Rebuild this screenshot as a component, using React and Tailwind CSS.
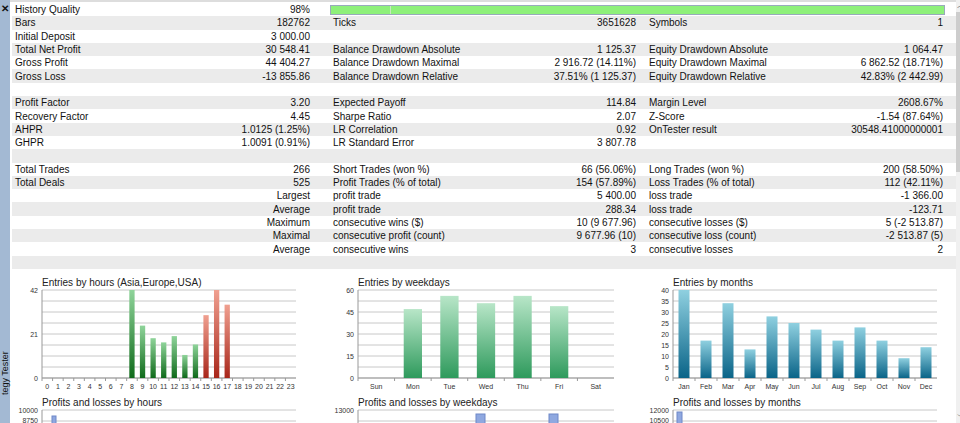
import React from 'react';

const rows = [
  [['History Quality', '98%'], 'bar', null],
  [['Bars', '182762'], ['Ticks', '3651628'], ['Symbols', '1']],
  [['Initial Deposit', '3 000.00'], null, null],
  [['Total Net Profit', '30 548.41'], ['Balance Drawdown Absolute', '1 125.37'], ['Equity Drawdown Absolute', '1 064.47']],
  [['Gross Profit', '44 404.27'], ['Balance Drawdown Maximal', '2 916.72 (14.11%)'], ['Equity Drawdown Maximal', '6 862.52 (18.71%)']],
  [['Gross Loss', '-13 855.86'], ['Balance Drawdown Relative', '37.51% (1 125.37)'], ['Equity Drawdown Relative', '42.83% (2 442.99)']],
  [null, null, null],
  [['Profit Factor', '3.20'], ['Expected Payoff', '114.84'], ['Margin Level', '2608.67%']],
  [['Recovery Factor', '4.45'], ['Sharpe Ratio', '2.07'], ['Z-Score', '-1.54 (87.64%)']],
  [['AHPR', '1.0125 (1.25%)'], ['LR Correlation', '0.92'], ['OnTester result', '30548.41000000001']],
  [['GHPR', '1.0091 (0.91%)'], ['LR Standard Error', '3 807.78'], null],
  [null, null, null],
  [['Total Trades', '266'], ['Short Trades (won %)', '66 (56.06%)'], ['Long Trades (won %)', '200 (58.50%)']],
  [['Total Deals', '525'], ['Profit Trades (% of total)', '154 (57.89%)'], ['Loss Trades (% of total)', '112 (42.11%)']],
  [['', 'Largest'], ['profit trade', '5 400.00'], ['loss trade', '-1 366.00']],
  [['', 'Average'], ['profit trade', '288.34'], ['loss trade', '-123.71']],
  [['', 'Maximum'], ['consecutive wins ($)', '10 (9 677.96)'], ['consecutive losses ($)', '5 (-2 513.87)']],
  [['', 'Maximal'], ['consecutive profit (count)', '9 677.96 (10)'], ['consecutive loss (count)', '-2 513.87 (5)']],
  [['', 'Average'], ['consecutive wins', '3'], ['consecutive losses', '2']],
  [null, null, null],
];

function Cell({ c, w }) {
  if (c === 'bar') {
    return (
      <div className={`${w} h-full flex items-center`}>
        <div className="w-full h-[10px] bg-[#8ef07a] border border-[#9ab] flex">
          <div className="w-[60px] border-r border-[#c8e8c0]" />
          <div className="flex-1" />
        </div>
      </div>
    );
  }
  return (
    <div className={`${w} flex justify-between items-center pr-[2px]`}>
      <span className="pl-[3px]">{c ? c[0] : ''}</span>
      <span>{c ? c[1] : ''}</span>
    </div>
  );
}

function Chart({ title, yTicks, yMax, labels, values, colors, plotL, plotR, sub, subTicks, subBars, grad }) {
  const top = 20, bot = 108;
  const step = (plotR - plotL) / labels.length;
  const bw = Math.max(5, step * 0.5);
  return (
    <svg width="312" height="154" className="shrink-0" style={{ fontFamily: 'Liberation Sans, Arial, sans-serif' }}>
      <defs>
        {colors.map((c, i) => (
          <linearGradient key={i} id={`g${grad}${i}`} x1="0" y1="0" x2="0" y2="1">
            <stop offset="0" stopColor={c[0]} />
            <stop offset="1" stopColor={c[1]} />
          </linearGradient>
        ))}
      </defs>
      <text x={plotL} y="16" fontSize="10" fill="#222">{title}</text>
      {[0, 1, 2, 3, 4, 5, 6, 7, 8].map((i) => {
        const y = top + ((bot - top) * i) / 8;
        return <line key={i} x1={plotL} x2={plotR} y1={y} y2={y} stroke="#c8c8c8" />;
      })}
      <line x1={plotL} x2={plotL} y1={top} y2={bot} stroke="#999" />
      <line x1={plotL} x2={plotR} y1={bot} y2={bot} stroke="#999" />
      {yTicks.map((t) => (
        <text key={t} x={plotL - 4} y={bot - ((bot - top) * t) / yMax + 3} fontSize="7" textAnchor="end" fill="#333">{t}</text>
      ))}
      {labels.map((l, i) => {
        const cx = plotL + step * (i + 0.5);
        const v = values[i] || 0;
        const h = ((bot - top) * v) / yMax;
        const ci = colors.length > 1 && i >= 15 ? 1 : 0;
        return (
          <g key={i}>
            <line x1={plotL + step * i} x2={plotL + step * i} y1={bot} y2={bot + 3} stroke="#999" />
            {v > 0 && <rect x={cx - bw / 2} y={bot - h} width={bw} height={h} fill={`url(#g${grad}${ci})`} />}
            <text x={cx} y={bot + 11} fontSize="7" textAnchor="middle" fill="#333">{l}</text>
          </g>
        );
      })}
      <text x={plotL} y="136" fontSize="10" fill="#222">{sub}</text>
      <line x1={plotL} x2={plotR} y1="140" y2="140" stroke="#c8c8c8" />
      <line x1={plotL} x2={plotR} y1="151" y2="151" stroke="#c8c8c8" />
      <line x1={plotL} x2={plotL} y1="140" y2="154" stroke="#999" />
      <text x={plotL - 4} y="143" fontSize="7" textAnchor="end" fill="#333">{subTicks[0]}</text>
      {subTicks[1] && <text x={plotL - 4} y="153" fontSize="7" textAnchor="end" fill="#333">{subTicks[1]}</text>}
      {subBars.map(([x, y, w], i) => (
        <rect key={i} x={x} y={y} width={w} height={154 - y} fill="#8fa8e0" stroke="#6f88c8" />
      ))}
    </svg>
  );
}

export default function App() {
  return (
    <div className="w-[960px] h-[423px] flex bg-white overflow-hidden text-[10px] text-[#111]" style={{ fontFamily: '"Liberation Sans", Arial, sans-serif' }}>
      <div className="w-[10px] bg-[#a3b9d3] flex flex-col items-center">
        <span className="text-[10px] font-bold leading-[14px] mt-[2px]">✕</span>
        <div className="flex-1" />
        <span className="text-[9px] whitespace-nowrap -rotate-90 mb-[28px] w-[10px] leading-[10px]">tegy Tester</span>
      </div>
      <div className="flex-1 flex flex-col pl-[2px] border-t-2 border-[#ddd]">
        <div className="flex flex-col pt-[1px]">
          {rows.map((r, i) => (
            <div key={i} className={`h-[13.3px] flex items-center ${i % 2 ? 'bg-[#ebebeb]' : 'bg-white'}`}>
              <Cell c={r[0]} w="w-[300px]" />
              <div className="w-[18px]" />
              {r[1] === 'bar' ? (
                <Cell c="bar" w="w-[615px]" />
              ) : (
                <>
                  <Cell c={r[1]} w="w-[308px]" />
                  <div className="w-[8px]" />
                  <Cell c={r[2]} w="w-[299px]" />
                </>
              )}
            </div>
          ))}
        </div>
        <div className="flex mt-[1px]">
          <Chart
            grad="a" title="Entries by hours (Asia,Europe,USA)" yTicks={[0, 21, 42]} yMax={42}
            labels={Array.from({ length: 24 }, (_, i) => i)}
            values={[0, 0, 0, 0, 0, 0, 0, 0, 42, 25, 19, 17, 20, 11, 16, 30, 42, 35]}
            colors={[['#8fd49a', '#0f6a1a'], ['#f0a090', '#a8261a']]}
            plotL={30} plotR={284} sub="Profits and losses by hours" subTicks={['10000', '8750']}
            subBars={[[40, 146, 4]]}
          />
          <div className="w-[4px]" />
          <Chart
            grad="b" title="Entries by weekdays" yTicks={[0, 15, 30, 45, 60]} yMax={60}
            labels={['Sun', 'Mon', 'Tue', 'Wed', 'Thu', 'Fri', 'Sat']}
            values={[0, 47, 56, 51, 56, 49, 0]}
            colors={[['#b8e6c8', '#2e9a5c']]}
            plotL={30} plotR={286} sub="Profits and losses by weekdays" subTicks={['13000']}
            subBars={[[148, 144, 9], [221, 144, 9]]}
          />
          <div className="w-[4px]" />
          <Chart
            grad="c" title="Entries by months" yTicks={[0, 5, 10, 15, 20, 25, 30, 35, 40]} yMax={40}
            labels={['Jan', 'Feb', 'Mar', 'Apr', 'May', 'Jun', 'Jul', 'Aug', 'Sep', 'Oct', 'Nov', 'Dec']}
            values={[40, 17, 34, 13, 28, 25, 22, 17, 23, 17, 9, 14]}
            colors={[['#8fd0e0', '#0a6488']]}
            plotL={29} plotR={293} sub="Profits and losses by months" subTicks={['12000', '10500']}
            subBars={[[33, 142, 5]]}
          />
        </div>
      </div>
      <div className="w-[13px] bg-[#f0f0f0] flex flex-col items-center">
        <span className="text-[8px] leading-[12px] text-[#555]">︿</span>
        <div className="w-[9px] h-[160px] bg-[#cdcdcd]" />
        <div className="flex-1" />
        <span className="text-[8px] leading-[12px] text-[#555]">﹀</span>
      </div>
    </div>
  );
}
